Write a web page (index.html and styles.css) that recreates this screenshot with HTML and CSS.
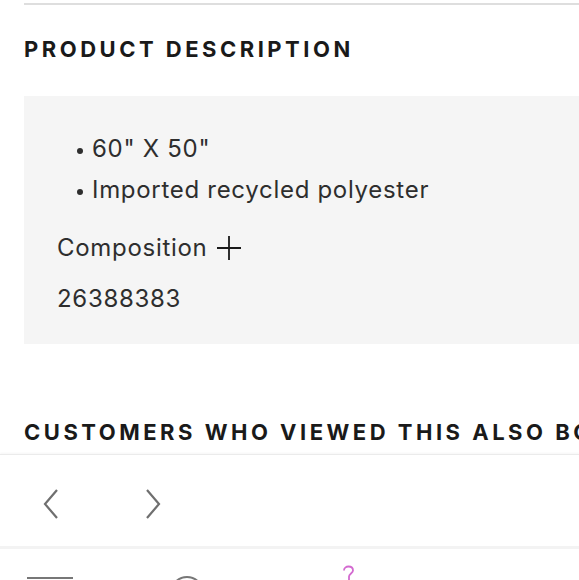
FILE: index.html
```html
<!DOCTYPE html>
<html>
<head>
<meta charset="utf-8">
<link rel="stylesheet" href="styles.css">
</head>
<body>
<div class="page">
  <div class="topline"></div>
  <h2 class="heading">PRODUCT DESCRIPTION</h2>
  <div class="descbox">
    <ul class="bullets">
      <li>60" X 50"</li>
      <li>Imported recycled polyester</li>
    </ul>
    <div class="composition">Composition <span class="plus"><svg width="24" height="24" viewBox="0 0 24 24"><path d="M12 0v24M0 12h24" stroke="#1a1a1a" stroke-width="1.8" fill="none"/></svg></span></div>
    <div class="sku">26388383</div>
  </div>
  <h2 class="heading heading2">CUSTOMERS WHO VIEWED THIS ALSO BOUGHT</h2>
  <div class="carousel">
    <span class="arrow"><svg width="16" height="30" viewBox="0 0 16 30"><path d="M14 1L2 15l12 14" stroke="#6f6f6f" stroke-width="2.2" fill="none"/></svg></span>
    <span class="arrow"><svg width="16" height="30" viewBox="0 0 16 30"><path d="M2 1l12 14L2 29" stroke="#6f6f6f" stroke-width="2.2" fill="none"/></svg></span>
  </div>
  <div class="navbar">
    <span class="nav-rect"></span>
    <span class="nav-circle"></span>
    <span class="nav-hook"><svg width="14" height="16" viewBox="0 0 14 16"><path d="M2 5.5C2 3 4 1.5 6.5 1.5S11 3 11 5.5c0 2.5-4 3.5-4 6V16" stroke="#d36ad0" stroke-width="1.8" fill="none"/></svg></span>
  </div>
</div>
</body>
</html>
```
FILE: styles.css
```css
html, body {
  margin: 0;
  padding: 0;
  background: #fff;
  overflow: hidden;
}
.page {
  width: 579px;
  height: 580px;
  overflow: hidden;
  font-family: Inter, "Liberation Sans", sans-serif;
  color: #222;
}
.topline {
  margin: 3px 0 0 24px;
  height: 2px;
  background: #dedede;
}
.heading {
  margin: 30px 0 0 24px;
  font-size: 22px;
  line-height: 28px;
  font-weight: 700;
  letter-spacing: 3.5px;
  white-space: nowrap;
  color: #1a1a1a;
}
.descbox {
  margin: 33px 0 0 24px;
  width: 600px;
  background: #f5f5f5;
  padding: 32px 0 0 33px;
  box-sizing: border-box;
  height: 248px;
  font-size: 24px;
  letter-spacing: 0.7px;
  color: #2e2e2e;
}
.bullets {
  margin: 0;
  padding: 0 0 0 35px;
  list-style: none;
}
.bullets li {
  line-height: 41px;
  position: relative;
}
.bullets li::before {
  content: "";
  position: absolute;
  left: -15px;
  top: 20px;
  width: 6px;
  height: 6px;
  border-radius: 50%;
  background: #2e2e2e;
}
.composition {
  margin-top: 23px;
  line-height: 30px;
  display: flex;
  align-items: center;
  gap: 10px;
}
.plus {
  display: flex;
}
.sku {
  margin-top: 21px;
  line-height: 30px;
}
.heading2 {
  margin-top: 74px;
}
.carousel {
  margin-top: 8px;
  height: 92px;
  box-sizing: border-box;
  padding-top: 6px;
  border-top: 1px solid #ebebeb;
  box-shadow: 0 -1px 2px rgba(0,0,0,0.04);
  display: flex;
  align-items: center;
  padding-left: 43px;
  gap: 86px;
}
.arrow {
  display: flex;
}
.navbar {
  border-top: 3px solid #f3f3f3;
  height: 40px;
  position: relative;
}
.nav-rect {
  position: absolute;
  left: 27px;
  top: 28px;
  width: 46px;
  height: 20px;
  border-top: 2px solid #777;
}
.nav-circle {
  position: absolute;
  left: 170px;
  top: 27px;
  width: 30px;
  height: 30px;
  border: 2px solid #777;
  border-radius: 50%;
}
.nav-hook {
  position: absolute;
  left: 342px;
  top: 16px;
}
```
